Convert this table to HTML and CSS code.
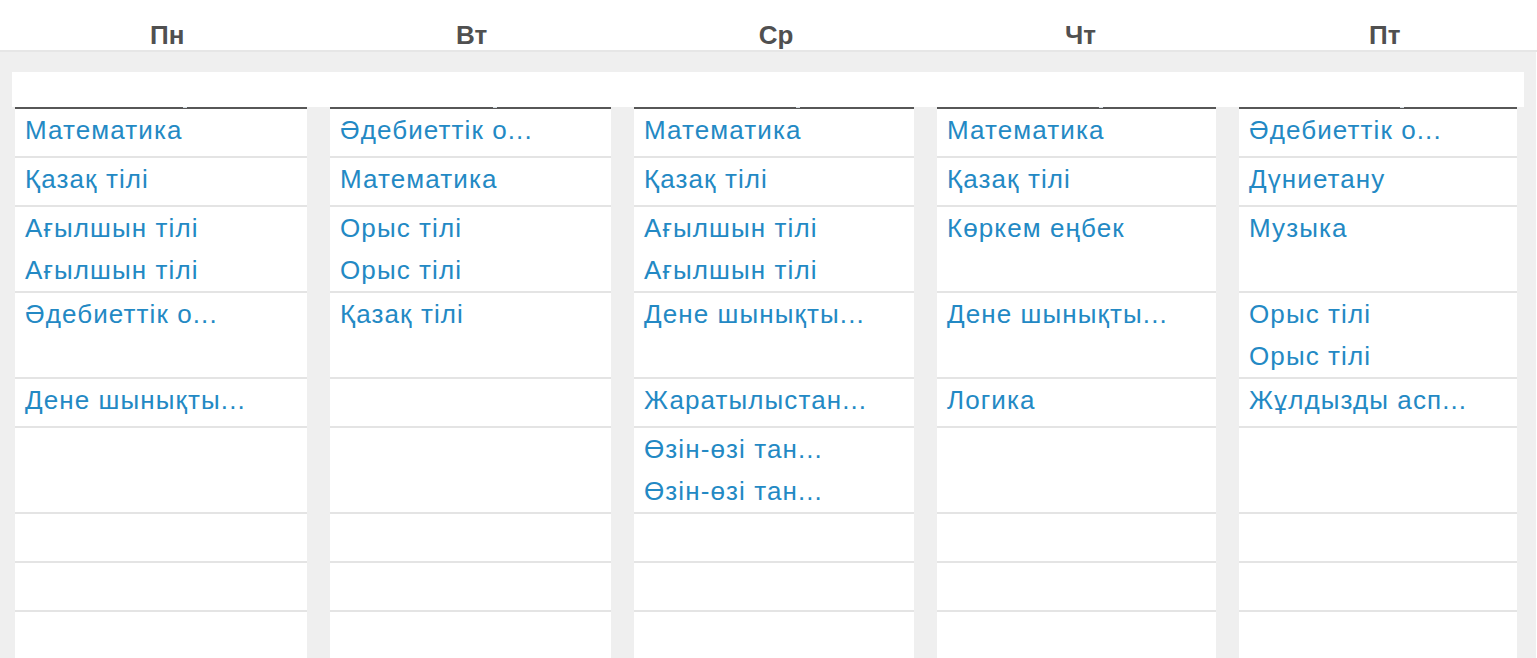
FILE: index.html
```html
<!DOCTYPE html>
<html lang="kk">
<head>
<meta charset="utf-8">
<title>Кесте</title>
<link rel="stylesheet" href="styles.css">
</head>
<body>
<div class="page">
  <div class="days">
    <div class="day">Пн</div>
    <div class="day">Вт</div>
    <div class="day">Ср</div>
    <div class="day">Чт</div>
    <div class="day">Пт</div>
  </div>
  <div class="board">
    <div class="toolbar"></div>
    <div class="grid">
      <!-- row 1 -->
      <div class="cell top"><a class="item">Математика</a></div>
      <div class="cell top"><a class="item">Әдебиеттік о...</a></div>
      <div class="cell top"><a class="item">Математика</a></div>
      <div class="cell top"><a class="item">Математика</a></div>
      <div class="cell top"><a class="item">Әдебиеттік о...</a></div>
      <!-- row 2 -->
      <div class="cell"><a class="item">Қазақ тілі</a></div>
      <div class="cell"><a class="item">Математика</a></div>
      <div class="cell"><a class="item">Қазақ тілі</a></div>
      <div class="cell"><a class="item">Қазақ тілі</a></div>
      <div class="cell"><a class="item">Дүниетану</a></div>
      <!-- row 3 -->
      <div class="cell"><a class="item">Ағылшын тілі</a><a class="item">Ағылшын тілі</a></div>
      <div class="cell"><a class="item">Орыс тілі</a><a class="item">Орыс тілі</a></div>
      <div class="cell"><a class="item">Ағылшын тілі</a><a class="item">Ағылшын тілі</a></div>
      <div class="cell"><a class="item">Көркем еңбек</a></div>
      <div class="cell"><a class="item">Музыка</a></div>
      <!-- row 4 -->
      <div class="cell"><a class="item">Әдебиеттік о...</a></div>
      <div class="cell"><a class="item">Қазақ тілі</a></div>
      <div class="cell"><a class="item">Дене шынықты...</a></div>
      <div class="cell"><a class="item">Дене шынықты...</a></div>
      <div class="cell"><a class="item">Орыс тілі</a><a class="item">Орыс тілі</a></div>
      <!-- row 5 -->
      <div class="cell"><a class="item">Дене шынықты...</a></div>
      <div class="cell"></div>
      <div class="cell"><a class="item">Жаратылыстан...</a></div>
      <div class="cell"><a class="item">Логика</a></div>
      <div class="cell"><a class="item">Жұлдызды асп...</a></div>
      <!-- row 6 -->
      <div class="cell"></div>
      <div class="cell"></div>
      <div class="cell"><a class="item">Өзін-өзі тан...</a><a class="item">Өзін-өзі тан...</a></div>
      <div class="cell"></div>
      <div class="cell"></div>
      <!-- row 7 -->
      <div class="cell"></div>
      <div class="cell"></div>
      <div class="cell"></div>
      <div class="cell"></div>
      <div class="cell"></div>
      <!-- row 8 -->
      <div class="cell"></div>
      <div class="cell"></div>
      <div class="cell"></div>
      <div class="cell"></div>
      <div class="cell"></div>
      <!-- row 9 -->
      <div class="cell"></div>
      <div class="cell"></div>
      <div class="cell"></div>
      <div class="cell"></div>
      <div class="cell"></div>
      <!-- row 10 -->
      <div class="cell"></div>
      <div class="cell"></div>
      <div class="cell"></div>
      <div class="cell"></div>
      <div class="cell"></div>
    </div>
  </div>
</div>
</body>
</html>
```
FILE: styles.css
```css
html, body {
  margin: 0;
  padding: 0;
  background: #ffffff;
  overflow: hidden;
}

body {
  font-family: "Liberation Sans", Arial, sans-serif;
}

.page {
  width: 1536px;
}

.days {
  display: grid;
  grid-template-columns: repeat(5, 1fr);
  padding-left: 15px;
  margin-right: -1px;
  height: 50px;
  border-bottom: 2px solid #e6e6e6;
}

.day {
  text-align: center;
  padding-top: 20px;
  font-size: 26px;
  line-height: 30px;
  font-weight: bold;
  color: #505050;
}

.board {
  background: #efefef;
  padding: 20px 12px 0;
  height: 700px;
}

.toolbar {
  height: 35px;
  background: #ffffff;
}

.grid {
  display: grid;
  grid-template-columns: 292px 281px 280px 279px 278px;
  column-gap: 23px;
  padding-left: 3px;
}

.cell {
  background: #ffffff;
  min-height: 47px;
  border-bottom: 2px solid #e4e4e4;
  padding-left: 10px;
}

.cell.top {
  position: relative;
  border-top: 2px solid #575757;
}

.cell.top::after {
  content: "";
  position: absolute;
  top: -2px;
  left: calc(50% + 22px);
  width: 4px;
  height: 1px;
  background: #d5dde2;
}

.item {
  display: block;
  font-size: 26px;
  line-height: 42px;
  letter-spacing: 1.1px;
  color: #2389c4;
  white-space: nowrap;
  cursor: pointer;
}
```
